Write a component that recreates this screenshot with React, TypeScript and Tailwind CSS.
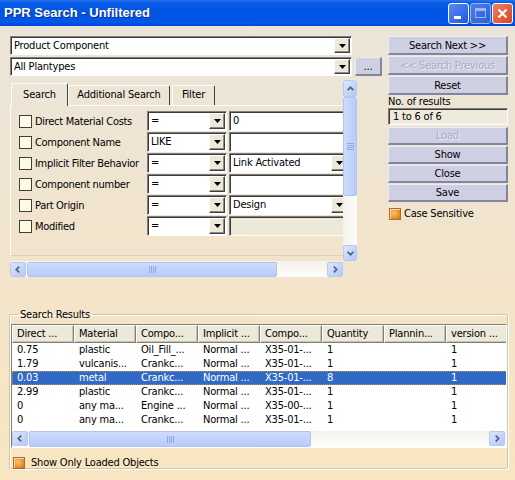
import React from 'react';

const FONT = "font-['DejaVu_Sans_Condensed','Liberation_Sans',Arial,sans-serif]";
const TITLE_FONT = "font-['Liberation_Sans',Arial,sans-serif]";

const Arrow: React.FC = () => (
  <svg width="7" height="4" viewBox="0 0 7 4">
    <polygon points="0,0 7,0 3.5,4" fill="#000" />
  </svg>
);

// classic sunken combo box
const Combo: React.FC<{ text?: string; className: string; disabled?: boolean; noButton?: boolean }> = ({
  text,
  className,
  disabled,
  noButton,
}) => (
  <div
    className={`${className} flex shrink-0 border border-t-[#7f7f7f] border-l-[#7f7f7f] border-r-white border-b-white shadow-[inset_1px_1px_0_#3a3a3a] ${
      disabled ? 'bg-[#ece9d8]' : 'bg-white'
    }`}
  >
    <div className="flex-1 pl-[3px] pt-[1px] text-[11px] leading-[15px] whitespace-nowrap overflow-hidden">{text}</div>
    {!noButton && (
      <div className="w-[16px] my-[1px] mr-[1px] flex items-center justify-center bg-[#ece9d8] border border-t-white border-l-white border-r-[#404040] border-b-[#404040] shadow-[inset_-1px_-1px_0_#8a8a8a]">
        <Arrow />
      </div>
    )}
  </div>
);

const Btn: React.FC<{ label: string; className?: string; disabled?: boolean }> = ({ label, className, disabled }) => (
  <div
    className={`${className ?? ''} flex items-center justify-center bg-[#cfcfe4] border-t border-l border-t-[#ececf6] border-l-[#ececf6] border-r-2 border-b-2 border-r-[#84849e] border-b-[#84849e] text-[11px] leading-[13px] whitespace-nowrap ${
      disabled ? 'text-[#ababc6] [text-shadow:1px_1px_0_#ececf5]' : 'text-black'
    }`}
  >
    {label}
  </div>
);

const CheckBox: React.FC = () => (
  <div className="w-[13px] h-[13px] shrink-0 border border-[#3f3f3f] bg-[#fffbe3]" />
);

const OrangeBox: React.FC = () => (
  <div className="w-[12px] h-[12px] shrink-0 border border-[#b56a24] bg-[radial-gradient(circle_at_40%_40%,#f8c26a_0%,#e48a28_70%,#c8671a_100%)] shadow-[inset_1px_1px_0_#f6d9a6]" />
);

const ScrollArrow: React.FC<{ dir: 'up' | 'down' | 'left' | 'right'; className: string }> = ({ dir, className }) => {
  const paths: Record<string, string> = {
    up: 'M3 6 L6.5 2.5 L10 6',
    down: 'M3 3 L6.5 6.5 L10 3',
    left: 'M6 3 L2.5 6.5 L6 10',
    right: 'M3 3 L6.5 6.5 L3 10',
  };
  const vertical = dir === 'up' || dir === 'down';
  return (
    <div
      className={`${className} shrink-0 flex items-center justify-center rounded-[2px] border border-[#b7c9f3] bg-linear-to-br from-[#dce6fd] to-[#b4c8f6]`}
    >
      <svg width={vertical ? 11 : 8} height={vertical ? 8 : 11} viewBox={vertical ? '0 0 13 9' : '0 0 9 13'}>
        <path d={paths[dir]} fill="none" stroke="#4d6185" strokeWidth="2" />
      </svg>
    </div>
  );
};

const HThumb: React.FC<{ className: string }> = ({ className }) => (
  <div
    className={`${className} h-full shrink-0 rounded-[2px] border border-[#b1c4f1] bg-linear-to-b from-[#cddcfd] to-[#b8cbf8] flex items-center justify-center gap-[1px]`}
  >
    <div className="w-[1px] h-[7px] bg-[#8fa8e6]" />
    <div className="w-[1px] h-[7px] bg-[#8fa8e6]" />
    <div className="w-[1px] h-[7px] bg-[#8fa8e6]" />
    <div className="w-[1px] h-[7px] bg-[#8fa8e6]" />
  </div>
);

const rows: { label: string; op: string; value: string; kind: 'input' | 'combo' | 'disabled' }[] = [
  { label: 'Direct Material Costs', op: '=', value: '0', kind: 'input' },
  { label: 'Component Name', op: 'LIKE', value: '', kind: 'input' },
  { label: 'Implicit Filter Behavior', op: '=', value: 'Link Activated', kind: 'combo' },
  { label: 'Component number', op: '=', value: '', kind: 'input' },
  { label: 'Part Origin', op: '=', value: 'Design', kind: 'combo' },
  { label: 'Modified', op: '=', value: '', kind: 'disabled' },
];

const headers = ['Direct ...', 'Material', 'Compo...', 'Implicit ...', 'Compo...', 'Quantity', 'Plannin...', 'version ...'];

const results: string[][] = [
  ['0.75', 'plastic', 'Oil_Fill_...', 'Normal ...', 'X35-01-...', '1', '', '1'],
  ['1.79', 'vulcanis...', 'Crankc...', 'Normal ...', 'X35-01-...', '1', '', '1'],
  ['0.03', 'metal', 'Crankc...', 'Normal ...', 'X35-01-...', '8', '', '1'],
  ['2.99', 'plastic', 'Crankc...', 'Normal ...', 'X35-01-...', '1', '', '1'],
  ['0', 'any ma...', 'Engine ...', 'Normal ...', 'X35-00-...', '1', '', '1'],
  ['0', 'any ma...', 'Crankc...', 'Normal ...', 'X35-01-...', '1', '', '1'],
];

const App: React.FC = () => {
  return (
    <div className={`w-[515px] h-[480px] overflow-hidden flex flex-col ${FONT} tracking-[-0.2px] text-black select-none`}>
      {/* Title bar */}
      <div className="h-[26px] shrink-0 flex items-center bg-[linear-gradient(to_bottom,#2a72f0_0%,#0a5de8_10%,#0054e3_45%,#0057ea_85%,#0046d8_100%)] pl-[4px] pr-[2px]">
        <div className={`flex-1 text-white font-bold text-[13px] leading-[16px] tracking-normal [text-shadow:1px_1px_0_#0a2f8a] ${TITLE_FONT}`}>
          PPR Search - Unfiltered
        </div>
        <div className="flex gap-[1px]">
          <div className="w-[21px] h-[21px] rounded-[3px] border border-white bg-linear-to-br from-[#5a8cf5] to-[#1f56dc] relative">
            <div className="absolute left-[5px] bottom-[4px] w-[7px] h-[3px] bg-white" />
          </div>
          <div className="w-[21px] h-[21px] rounded-[3px] border border-[#9db6f0] bg-linear-to-br from-[#4a7cea] to-[#2e5fd8] flex items-center justify-center">
            <div className="w-[11px] h-[10px] border border-[#9db6f0] border-t-[3px]" />
          </div>
          <div className="w-[21px] h-[21px] rounded-[3px] border border-white bg-linear-to-br from-[#ee8060] to-[#d8421c] flex items-center justify-center">
            <svg width="11" height="11" viewBox="0 0 11 11">
              <path d="M1.5 1.5 L9.5 9.5 M9.5 1.5 L1.5 9.5" stroke="#fff" strokeWidth="2.2" />
            </svg>
          </div>
        </div>
      </div>

      {/* Body */}
      <div className="flex-1 flex flex-col bg-linear-to-b from-[#ebe5d9] via-[#f2e4cc] to-[#f9e5c1] pt-[10px] pl-[10px]">
        <div className="flex gap-[6px]">
          {/* Left column */}
          <div className="w-[372px] flex flex-col">
            <Combo className="w-[342px] h-[19px]" text="Product Component" />
            <div className="mt-[2px] flex items-start">
              <Combo className="w-[342px] h-[19px]" text="All Plantypes" />
              <Btn label="..." className="ml-[3px] w-[27px] h-[19px]" />
            </div>

            {/* Scrolled tab area */}
            <div className="mt-[4px] w-[347px] h-[197px] grid grid-cols-[333px_14px] grid-rows-[181px_16px]">
              <div className="overflow-hidden">
                <div className="w-[380px]">
                  <div className="flex items-end h-[25px] pl-[3px]">
                    <div className="w-[57px] -ml-[2px] border-t border-l border-t-white border-l-white border-r border-r-[#404040] rounded-t-[2px] flex items-center justify-center text-[11px] relative z-10 bg-[#ede6d8] -mb-[1px] h-[23px]">
                      Search
                    </div>
                    <div className="w-[102px] h-[20px] border-t border-l border-t-white border-l-white border-r border-r-[#404040] rounded-t-[2px] flex items-center justify-center text-[11px]">
                      Additional Search
                    </div>
                    <div className="w-[43px] h-[20px] ml-[2px] border-t border-l border-t-white border-l-white border-r border-r-[#404040] rounded-t-[2px] flex items-center justify-center text-[11px]">
                      Filter
                    </div>
                  </div>
                  <div className="h-[151px] border-t border-l border-white border-b border-b-[#d8d2c2] pt-[5px] flex flex-col gap-[1px]">
                    {rows.map((r) => (
                      <div key={r.label} className="flex items-center h-[20px]">
                        <div className="w-[136px] flex items-center pl-[8px] gap-[3px]">
                          <CheckBox />
                          <span className="text-[11px] leading-[13px] tracking-[-0.3px] whitespace-nowrap">{r.label}</span>
                        </div>
                        <Combo className="w-[80px] h-[20px]" text={r.op} />
                        <Combo
                          className="ml-[2px] w-[120px] h-[20px]"
                          text={r.value}
                          noButton={r.kind !== 'combo'}
                          disabled={r.kind === 'disabled'}
                        />
                      </div>
                    ))}
                  </div>
                </div>
              </div>
              {/* vertical scrollbar */}
              <div className="flex flex-col h-[181px] bg-linear-to-r from-[#f4f2ea] to-[#fdfdfa]">
                <ScrollArrow dir="up" className="w-[14px] h-[17px]" />
                <div className="flex-1 flex flex-col">
                  <div className="h-[99px] rounded-[2px] border border-[#b1c4f1] bg-linear-to-r from-[#cddcfd] to-[#b8cbf8] flex flex-col items-center justify-center gap-[1px]">
                    <div className="w-[7px] h-[1px] bg-[#8fa8e6]" />
                    <div className="w-[7px] h-[1px] bg-[#8fa8e6]" />
                    <div className="w-[7px] h-[1px] bg-[#8fa8e6]" />
                    <div className="w-[7px] h-[1px] bg-[#8fa8e6]" />
                  </div>
                </div>
                <ScrollArrow dir="down" className="w-[14px] h-[16px]" />
              </div>
              {/* horizontal scrollbar */}
              <div className="flex bg-linear-to-b from-[#f4f2ea] to-[#fdfdfa] pt-[1px]">
                <ScrollArrow dir="left" className="w-[16px] h-[15px]" />
                <div className="flex-1 flex pl-[1px]">
                  <HThumb className="w-[250px]" />
                </div>
                <ScrollArrow dir="right" className="w-[16px] h-[15px]" />
              </div>
              <div />
            </div>
          </div>

          {/* Right column */}
          <div className="w-[120px] flex flex-col">
            <Btn label="Search Next >>" className="h-[19px]" />
            <Btn label="<< Search Previous" className="mt-[1px] h-[19px]" disabled />
            <Btn label="Reset" className="mt-[1px] h-[19px]" />
            <div className="text-[11px] leading-[12px] mt-[1px]">No. of results</div>
            <div className="h-[17px] bg-[#eeebdc] border border-t-[#7f7f7f] border-l-[#7f7f7f] border-r-white border-b-white shadow-[inset_1px_1px_0_#3a3a3a] pl-[4px] text-[11px] leading-[15px]">
              1 to 6 of 6
            </div>
            <Btn label="Load" className="mt-[2px] h-[18px]" disabled />
            <Btn label="Show" className="mt-[1px] h-[18px]" />
            <Btn label="Close" className="mt-[1px] h-[18px]" />
            <Btn label="Save" className="mt-[1px] h-[18px]" />
            <div className="mt-[5px] ml-[1px] flex items-center gap-[3px]">
              <OrangeBox />
              <span className="text-[11px] leading-[13px]">Case Sensitive</span>
            </div>
          </div>
        </div>

        {/* Search results */}
        <fieldset className="mt-[31px] -ml-[1px] w-[499px] h-[161px] border border-[#cbc6b0] shadow-[inset_1px_1px_0_#fff,1px_1px_0_#fff] rounded-[2px] pl-[1px]">
          <legend className="ml-[7px] px-[2px] text-[11px] leading-[13px]">Search Results</legend>
          <div className="mt-[3px] w-[496px] border border-t-[#7f7f7f] border-l-[#7f7f7f] border-r-white border-b-white bg-white">
            <div className="overflow-hidden">
              <div className="flex w-[496px] h-[18px]">
                {headers.map((h, i) => (
                  <div
                    key={i}
                    className="w-[62px] shrink-0 h-full bg-[#ece9d8] border-t border-l border-t-white border-l-white border-r border-b border-r-[#7f7f7f] border-b-[#7f7f7f] shadow-[inset_-1px_-1px_0_#c8c4b2] pl-[4px] text-[11px] leading-[16px] whitespace-nowrap overflow-hidden"
                  >
                    {h}
                  </div>
                ))}
              </div>
              <div className="h-[88px]">
                {results.map((row, ri) => (
                  <div
                    key={ri}
                    className={`flex w-[496px] h-[14px] ${
                      ri === 2 ? 'bg-[#316ac5] text-white outline outline-1 outline-dotted outline-[#c98a3a] -outline-offset-1' : ''
                    }`}
                  >
                    {row.map((c, ci) => (
                      <div key={ci} className="w-[62px] shrink-0 pl-[5px] text-[11px] leading-[14px] whitespace-nowrap overflow-hidden">
                        {c}
                      </div>
                    ))}
                  </div>
                ))}
              </div>
              <div className="flex h-[16px] bg-linear-to-b from-[#f4f2ea] to-[#fdfdfa] pr-[1px]">
                <ScrollArrow dir="left" className="w-[16px] h-[15px]" />
                <div className="flex-1 flex pl-[1px]">
                  <HThumb className="w-[282px]" />
                </div>
                <ScrollArrow dir="right" className="w-[16px] h-[15px]" />
              </div>
            </div>
          </div>
          <div className="mt-[8px] ml-[2px] flex items-center gap-[6px]">
            <OrangeBox />
            <span className="text-[11px] leading-[13px]">Show Only Loaded Objects</span>
          </div>
        </fieldset>
      </div>
    </div>
  );
};

export default App;
